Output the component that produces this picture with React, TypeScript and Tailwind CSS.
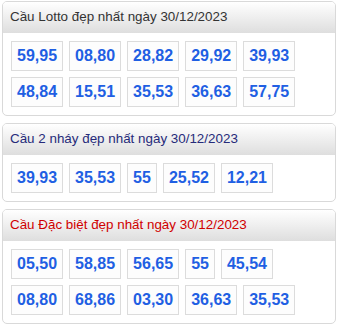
const panels = [
  {
    title: 'Cầu Lotto đẹp nhất ngày 30/12/2023',
    titleClass: 'text-[#333333]',
    rows: [
      ['59,95', '08,80', '28,82', '29,92', '39,93'],
      ['48,84', '15,51', '35,53', '36,63', '57,75'],
    ],
  },
  {
    title: 'Cầu 2 nháy đẹp nhất ngày 30/12/2023',
    titleClass: 'text-[#262b7a]',
    rows: [['39,93', '35,53', '55', '25,52', '12,21']],
  },
  {
    title: 'Cầu Đặc biệt đẹp nhất ngày 30/12/2023',
    titleClass: 'text-[#d00000]',
    rows: [
      ['05,50', '58,85', '56,65', '55', '45,54'],
      ['08,80', '68,86', '03,30', '36,63', '35,53'],
    ],
  },
];

export default function App() {
  return (
    <div className="w-[338px] px-[2px] pt-px font-['Liberation_Sans',Arial,sans-serif]">
      {panels.map((panel) => (
        <div
          key={panel.title}
          className="mb-[7px] rounded-[5px] border border-[#d9d9d9] bg-white overflow-hidden"
        >
          <div
            className={`h-[31px] px-[7px] flex items-center text-[13.4px] bg-gradient-to-b from-white to-[#dedede] ${panel.titleClass}`}
          >
            {panel.title}
          </div>
          <div className="px-[8px] pt-[8px] pb-[8px] flex flex-col gap-[6px]">
            {panel.rows.map((row, i) => (
              <div key={i} className="flex gap-[6px]">
                {row.map((num, j) => (
                  <span
                    key={j}
                    className="h-[30px] px-[5px] flex items-center border border-[#dcdcdc] bg-[#fdfdfd] text-[16px] font-bold text-[#1f5fe3]"
                  >
                    {num}
                  </span>
                ))}
              </div>
            ))}
          </div>
        </div>
      ))}
    </div>
  );
}
